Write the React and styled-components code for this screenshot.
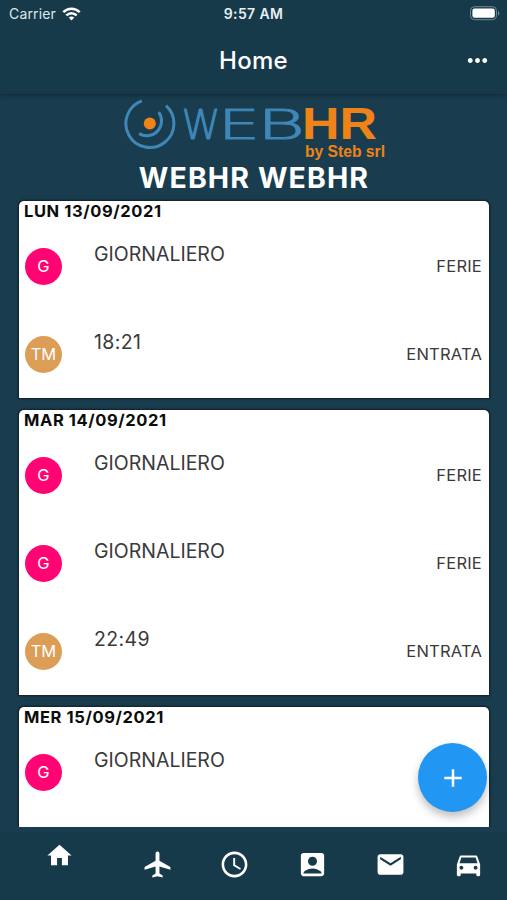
import React from 'react';
import styled, { createGlobalStyle } from 'styled-components';
import {
  MdHome,
  MdLocalAirport,
  MdAccessTime,
  MdAccountBox,
  MdMail,
  MdDirectionsCar,
  MdMoreHoriz,
  MdAdd,
} from 'react-icons/md';

const GlobalStyle = createGlobalStyle`
  * {
    box-sizing: border-box;
  }

  body {
    margin: 0;
    background: #1a3e4f;
    font-family: Inter, "Liberation Sans", sans-serif;
  }
`;

const Screen = styled.div`
  position: relative;
  display: flex;
  flex-direction: column;
  width: 507px;
  height: 900px;
  overflow: hidden;
  background: #193d4e;
`;

const Header = styled.header`
  z-index: 1;
  flex: none;
  height: 94px;
  background: #173a4b;
  color: #fff;
  box-shadow: 0 1px 4px rgba(20, 28, 34, 0.7);
`;

const StatusBar = styled.div`
  display: grid;
  grid-template-columns: 1fr auto 1fr;
  align-items: center;
  height: 27px;
  padding: 0 7px;
  font-size: 14px;
  line-height: 27px;
`;

const Carrier = styled.div`
  display: flex;
  align-items: center;
  gap: 6px;
  padding-left: 2px;
  color: #dfe7ea;
  letter-spacing: 0.15px;
`;

const Clock = styled.div`
  font-weight: 600;
  font-size: 14px;
  letter-spacing: 0.35px;
  color: #e8eef0;
`;

const BatteryIcon = styled.svg`
  justify-self: end;
`;

const TitleBar = styled.div`
  display: grid;
  grid-template-columns: 1fr auto 1fr;
  align-items: center;
  height: 66px;
  padding: 0 15px;
`;

const Title = styled.h1`
  grid-column: 2;
  margin: 0;
  font-size: 24px;
  font-weight: 500;
  letter-spacing: 0.3px;
`;

const MenuButton = styled.button`
  display: flex;
  justify-self: end;
  padding: 0;
  border: none;
  background: none;
  color: #fff;
  font-size: 29px;
`;

const Content = styled.main`
  display: flex;
  flex-direction: column;
  gap: 12px;
  flex: none;
  height: 733px;
  padding: 0 18px 0 19px;
  overflow: hidden;
`;

const Brand = styled.div`
  display: flex;
  flex-direction: column;
  align-items: center;
  flex: none;
  height: 95px;
  padding-top: 1px;
`;

const Logo = styled.svg`
  flex: none;
`;

const UserName = styled.h2`
  margin: 0;
  color: #fff;
  font-size: 28.5px;
  line-height: 34px;
  font-weight: 700;
  letter-spacing: 1.1px;
`;

const DayCard = styled.section`
  flex: none;
  border-radius: 5px 5px 0 0;
  background: #fff;
  box-shadow: 0 0 0 1px #14252f, 0 0 2px 1px rgba(0, 0, 0, 0.5);

  &:last-child {
    flex: 1;
  }
`;

const DayTitle = styled.h3`
  height: 21px;
  margin: 0;
  padding-left: 5px;
  color: #0c0c0c;
  font-size: 16.5px;
  line-height: 21px;
  font-weight: 700;
  letter-spacing: 0.6px;
`;

const EntryRow = styled.div`
  display: flex;
  align-items: center;
  height: 88px;
  padding: 0 7px 0 6px;
`;

const Avatar = styled.div`
  display: flex;
  align-items: center;
  justify-content: center;
  width: 37px;
  height: 37px;
  border-radius: 50%;
  background: ${props => props.$color};
  color: #fff;
  font-size: 16.5px;
`;

const EntryText = styled.div`
  flex: 1;
  align-self: flex-start;
  padding: 20px 0 0 32px;
  color: #3a3a3a;
  font-size: 19.5px;
  line-height: 24px;
  letter-spacing: ${props => (props.$time ? 0.4 : 0)}px;
`;

const EntryKind = styled.div`
  color: #3a3a3a;
  font-size: 16.5px;
  letter-spacing: 0.2px;
`;

const AddButton = styled.button`
  position: absolute;
  right: 20px;
  bottom: 88px;
  display: flex;
  align-items: center;
  justify-content: center;
  width: 69px;
  height: 69px;
  padding: 0;
  border: none;
  border-radius: 50%;
  background: #2196f3;
  color: #fff;
  font-size: 30px;
  box-shadow: 0 5px 8px rgba(0, 0, 0, 0.25);
`;

const TabBar = styled.nav`
  display: flex;
  flex: 1;
  margin-top: 5px;
  background: #173a4b;
`;

const Tab = styled.a`
  display: flex;
  flex: ${props => (props.$active ? 1.52 : 1)};
  align-items: flex-start;
  justify-content: center;
  padding-top: ${props => (props.$active ? 9 : 16.5)}px;
  color: #fff;
  font-size: ${props => (props.$active ? 29 : 31)}px;
`;

const KINDS = {
  FERIE: { initials: 'G', color: '#ff0472' },
  ENTRATA: { initials: 'TM', color: '#dc9d57' },
};

const days = [
  {
    title: 'LUN 13/09/2021',
    entries: [
      { text: 'GIORNALIERO', kind: 'FERIE' },
      { text: '18:21', kind: 'ENTRATA' },
    ],
  },
  {
    title: 'MAR 14/09/2021',
    entries: [
      { text: 'GIORNALIERO', kind: 'FERIE' },
      { text: 'GIORNALIERO', kind: 'FERIE' },
      { text: '22:49', kind: 'ENTRATA' },
    ],
  },
  {
    title: 'MER 15/09/2021',
    entries: [{ text: 'GIORNALIERO' }],
  },
];

const tabs = [
  { name: 'home', icon: MdHome },
  { name: 'travel', icon: MdLocalAirport },
  { name: 'hours', icon: MdAccessTime },
  { name: 'profile', icon: MdAccountBox },
  { name: 'mail', icon: MdMail },
  { name: 'car', icon: MdDirectionsCar },
];

// each thin letter of the wordmark is stretched to its own width
const thinLetters = [
  { char: 'W', x: 181.5, width: 39 },
  { char: 'E', x: 218, width: 42 },
  { char: 'B', x: 257, width: 48 },
];

function WifiIcon() {
  return (
    <svg width="19" height="14" viewBox="0 0 19 14" fill="none" stroke="#fff" strokeWidth="2.5">
      <path d="M1.3 5.2C6 .5 13 .5 17.7 5.2" />
      <path d="M4.3 8.3C7.3 5.4 11.7 5.4 14.7 8.3" />
      <path d="M6.7 10.6C8.2 9.2 10.8 9.2 12.3 10.6L9.5 13.4Z" fill="#fff" stroke="none" />
    </svg>
  );
}

function BrandLogo() {
  return (
    <Logo width="264" height="66" viewBox="122 95 264 66">
      <g fill="none" stroke="#3f87b9" strokeWidth="3">
        <path d="M141.8 100.9A24 24 0 1 0 166 105.7" />
        <path d="M158.7 112.2A14.8 14.8 0 0 1 139.1 133.6" />
      </g>
      <circle cx="149.8" cy="123.6" r="6" fill="#ef8318" />
      <g
        fill="#3f87b9"
        stroke="#3f87b9"
        strokeWidth="1"
        strokeLinejoin="round"
        fontFamily="'DejaVu Sans', sans-serif"
        fontWeight="200"
        fontSize="40.5"
      >
        {thinLetters.map(({ char, x, width }) => (
          <text key={char} x={x} y="138.5" textLength={width} lengthAdjust="spacingAndGlyphs">
            {char}
          </text>
        ))}
      </g>
      <g fill="#ef8318" fontFamily="'Liberation Sans', Arial, sans-serif" fontWeight="700">
        <text x="302" y="139" textLength="75" lengthAdjust="spacingAndGlyphs" fontSize="43.5">
          HR
        </text>
        <text x="305" y="156.5" textLength="80" lengthAdjust="spacingAndGlyphs" fontSize="16">
          by Steb srl
        </text>
      </g>
    </Logo>
  );
}

function App() {
  return (
    <>
      <GlobalStyle />
      <Screen>
        <Header>
          <StatusBar>
            <Carrier>
              Carrier
              <WifiIcon />
            </Carrier>
            <Clock>9:57 AM</Clock>
            <BatteryIcon width="30" height="15" viewBox="0 0 30 15">
              <rect x="0.5" y="0.7" width="26" height="13" rx="4" fill="none" stroke="#6f8792" />
              <rect x="2.4" y="2.6" width="22.4" height="9.2" rx="2.2" fill="#fff" />
              <path d="M28 5v4.6c1.8-.7 1.8-3.9 0-4.6z" fill="#6f8792" />
            </BatteryIcon>
          </StatusBar>
          <TitleBar>
            <Title>Home</Title>
            <MenuButton>
              <MdMoreHoriz />
            </MenuButton>
          </TitleBar>
        </Header>

        <Content>
          <Brand>
            <BrandLogo />
            <UserName>WEBHR WEBHR</UserName>
          </Brand>
          {days.map(day => (
            <DayCard key={day.title}>
              <DayTitle>{day.title}</DayTitle>
              {day.entries.map((entry, index) => {
                const kind = KINDS[entry.kind] || KINDS.FERIE;
                return (
                  <EntryRow key={index}>
                    <Avatar $color={kind.color}>{kind.initials}</Avatar>
                    <EntryText $time={entry.kind === 'ENTRATA'}>{entry.text}</EntryText>
                    {entry.kind && <EntryKind>{entry.kind}</EntryKind>}
                  </EntryRow>
                );
              })}
            </DayCard>
          ))}
        </Content>

        <TabBar>
          {tabs.map(({ name, icon: Icon }) => (
            <Tab key={name} $active={name === 'home'}>
              <Icon />
            </Tab>
          ))}
        </TabBar>

        <AddButton>
          <MdAdd />
        </AddButton>
      </Screen>
    </>
  );
}

export default App;
